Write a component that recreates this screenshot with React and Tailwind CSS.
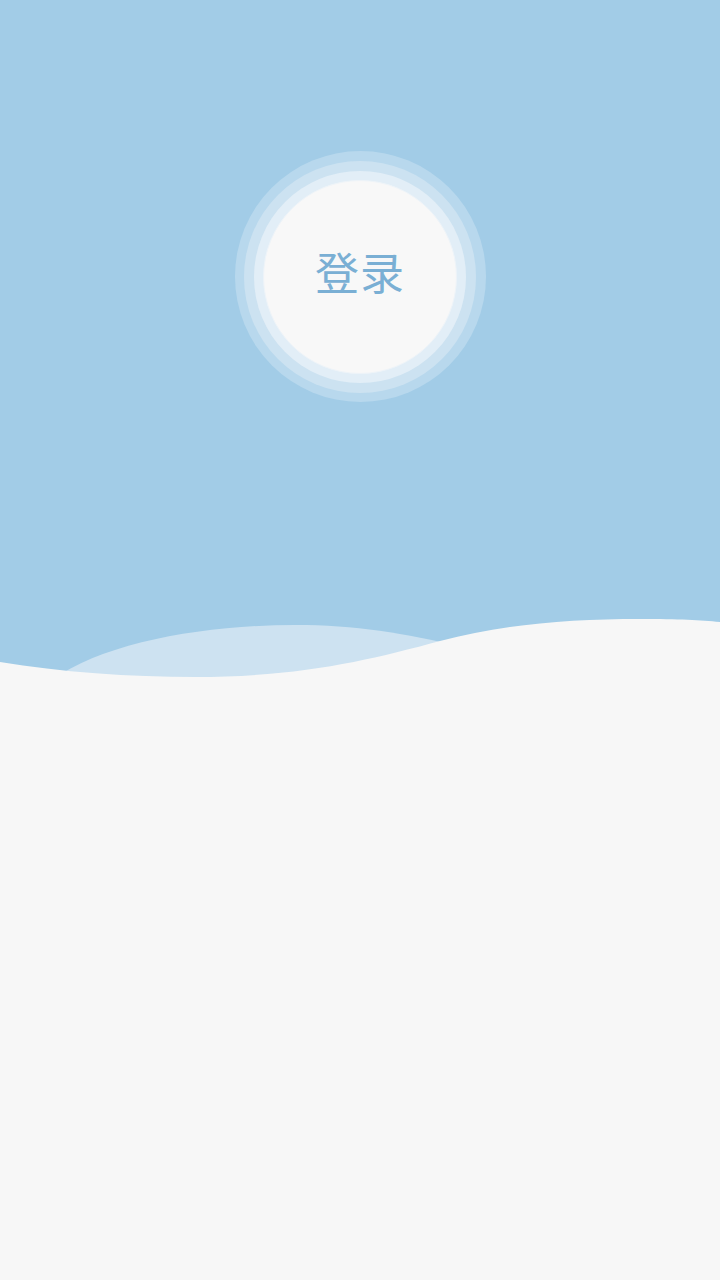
const Wave = () => (
  <svg className="block w-full h-[80px]" viewBox="0 0 720 80" preserveAspectRatio="none">
    <rect x="0" y="0" width="720" height="80" fill="#a2cce7" />
    <path d="M52,80 C105,42 205,25 295,25 C355,25 405,33 462,47 L462,80 Z" fill="#cde2f1" />
    <path
      d="M0,62 C60,72 130,77 195,77 C300,77 370,60 440,41 C505,24 570,19 640,19 C680,19 700,20 720,22 L720,80 L0,80 Z"
      fill="#f7f7f7"
    />
  </svg>
);

const App = () => {
  return (
    <div
      className="min-h-screen bg-[#f7f7f7]"
      style={{ fontFamily: '"Noto Sans", "Noto Sans CJK SC", sans-serif' }}
    >
      {/* Header */}
      <div className="h-[600px] bg-[#a2cce7] flex justify-center pt-[151px]">
        <div className="w-[251px] h-[251px] rounded-full bg-[#b8d8ed] flex items-center justify-center">
          <div className="w-[232px] h-[232px] rounded-full bg-[#cce2f1] flex items-center justify-center">
            <div className="w-[212px] h-[212px] rounded-full bg-[#e2eef7] flex items-center justify-center">
              <div className="w-[194px] h-[194px] rounded-full bg-[#f8f8f8] border border-[#eef4f9] flex items-center justify-center">
                <span className="text-[44px] leading-none text-[#7aafd4] tracking-[1px] pb-[8px]">登录</span>
              </div>
            </div>
          </div>
        </div>
      </div>
      <Wave />
    </div>
  );
};

export default App;
